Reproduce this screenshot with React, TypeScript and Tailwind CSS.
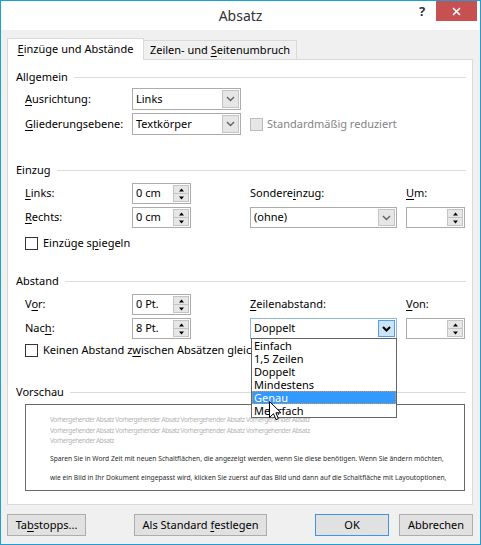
import type { ReactNode } from "react";

// accelerator key underline
const U = ({ children }: { children: ReactNode }) => (
  <span className="underline decoration-1 underline-offset-[2px]">{children}</span>
);

function Chevron({ dark = false }: { dark?: boolean }) {
  return (
    <svg width="9" height="6" viewBox="0 0 9 6">
      <path
        d="M1 1l3.5 3.5L8 1"
        fill="none"
        stroke={dark ? "#000" : "#606060"}
        strokeWidth={dark ? 2 : 1.4}
      />
    </svg>
  );
}

function Arrow({ down = false }: { down?: boolean }) {
  return (
    <svg width="7" height="4" viewBox="0 0 7 4">
      <path d={down ? "M1 0.5h5L3.5 3.5z" : "M1 3.5h5L3.5 0.5z"} fill="#000" />
    </svg>
  );
}

function Select({
  value,
  className = "",
  focused = false,
  children,
}: {
  value: string;
  className?: string;
  focused?: boolean;
  children?: ReactNode;
}) {
  return (
    <div
      className={`relative flex items-stretch border bg-white ${
        focused ? "border-[#8fb8e0]" : "border-[#acacac]"
      } ${className}`}
    >
      <div className="flex-1 pl-[3px] flex items-center">{value}</div>
      <div
        className={`w-[17px] m-px flex items-center justify-center border ${
          focused ? "border-[#569de5] bg-[#cce4f7]" : "border-[#c4c4c4] bg-[#e6e6e6]"
        }`}
      >
        <Chevron dark={focused} />
      </div>
      {children}
    </div>
  );
}

function Spin({ value = "" }: { value?: string }) {
  return (
    <div className="flex w-[59px] h-[21px] border border-[#acacac] bg-white">
      <div className="flex-1 pl-[3px] flex items-center">{value}</div>
      <div className="w-[16px] my-px mr-px flex flex-col">
        <div className="flex-1 flex items-center justify-center bg-[#e6e6e6] border border-[#c4c4c4]">
          <Arrow />
        </div>
        <div className="flex-1 flex items-center justify-center bg-[#e6e6e6] border border-t-0 border-[#c4c4c4]">
          <Arrow down />
        </div>
      </div>
    </div>
  );
}

function Box({ disabled = false }: { disabled?: boolean }) {
  return (
    <span
      className={`block w-[13px] h-[13px] border ${
        disabled ? "border-[#bcbcbc] bg-[#e6e6e6]" : "border-[#333333] bg-white"
      }`}
    />
  );
}

function Group({ title }: { title: string }) {
  return (
    <div className="flex items-center h-[16px] pl-[8px] pr-[6px]">
      <span>{title}</span>
      <div className="flex-1 h-px bg-[#dcdcdc] ml-[6px]" />
    </div>
  );
}

function Btn({
  children,
  className = "",
  primary = false,
}: {
  children: ReactNode;
  className?: string;
  primary?: boolean;
}) {
  return (
    <button
      className={`h-[22px] flex items-center justify-center border bg-[#e1e1e1] ${
        primary ? "border-[#3c96ee]" : "border-[#adadad]"
      } ${className}`}
    >
      <span>{children}</span>
    </button>
  );
}

const spacing = ["Einfach", "1,5 Zeilen", "Doppelt", "Mindestens", "Genau", "Mehrfach"];
const prev = "Vorhergehender Absatz";

export default function App() {
  return (
    <div className="w-[481px] h-[545px] border border-[#1c9fd6] bg-[#f0f0f0] flex flex-col font-['Noto_Sans',sans-serif] text-[11px] text-black">
      {/* title bar */}
      <div className="h-[29px] bg-white grid grid-cols-[1fr_auto_1fr]">
        <div />
        <div className="flex items-center text-[14px] text-[#333333]">Absatz</div>
        <div className="flex justify-end items-start">
          <span className="w-[14px] mt-[3px] mr-[7px] text-center text-[13px] leading-[14px] font-bold text-[#333333]">
            ?
          </span>
          <div className="w-[41px] h-[20px] mr-[3px] bg-[#c75050] flex items-center justify-center">
            <svg width="9" height="9" viewBox="0 0 9 9">
              <path d="M1 1l7 7M8 1l-7 7" stroke="#fff" strokeWidth="1.6" />
            </svg>
          </div>
        </div>
      </div>

      <div className="flex-1 flex flex-col pt-[8px]">
        {/* tabs */}
        <div className="ml-[6px] flex items-end h-[21px]">
          <div className="relative z-10 w-[137px] h-[22px] -mb-px border border-b-0 border-[#d9d9d9] bg-white flex items-center justify-center">
            <span>
              <U>E</U>inzüge und Abstände
            </span>
          </div>
          <div className="w-[153px] h-[19px] border border-l-0 border-b-0 border-[#d9d9d9] bg-[#f0f0f0] flex items-center justify-center">
            <span>
              Zeilen- und <U>S</U>eitenumbruch
            </span>
          </div>
        </div>

        {/* panel */}
        <div className="ml-[6px] w-[466px] h-[446px] border border-[#d9d9d9] bg-white flex flex-col pt-[9px]">
          <Group title="Allgemein" />
          <div className="mt-[3px] pl-[17px] flex items-center h-[22px]">
            <span className="w-[107px]">
              <U>A</U>usrichtung:
            </span>
            <Select value="Links" className="w-[109px] h-[22px]" />
          </div>
          <div className="mt-[3px] pl-[17px] flex items-center h-[22px]">
            <span className="w-[107px]">
              <U>G</U>liederungsebene:
            </span>
            <Select value="Textkörper" className="w-[109px] h-[22px]" />
            <span className="ml-[9px]">
              <Box disabled />
            </span>
            <span className="ml-[4px] text-[#838383]">Standardmäßig reduziert</span>
          </div>

          <div className="mt-[27px]">
            <Group title="Einzug" />
          </div>
          <div className="mt-[5px] pl-[17px] flex items-center h-[21px]">
            <span className="w-[107px]">
              <U>L</U>inks:
            </span>
            <Spin value="0 cm" />
            <span className="ml-[59px] w-[156px]">
              Sondere<U>i</U>nzug:
            </span>
            <span>
              <U>U</U>m:
            </span>
          </div>
          <div className="mt-[3px] pl-[17px] flex items-center h-[21px]">
            <span className="w-[107px]">
              <U>R</U>echts:
            </span>
            <Spin value="0 cm" />
            <Select value="(ohne)" className="ml-[59px] w-[147px] h-[21px]" />
            <div className="ml-[9px]">
              <Spin />
            </div>
          </div>
          <div className="mt-[7px] pl-[17px] flex items-center h-[16px]">
            <Box />
            <span className="ml-[5px]">
              Einzüge s<U>p</U>iegeln
            </span>
          </div>

          <div className="mt-[22px]">
            <Group title="Abstand" />
          </div>
          <div className="mt-[5px] pl-[17px] flex items-center h-[21px]">
            <span className="w-[107px]">
              V<U>o</U>r:
            </span>
            <Spin value="0 Pt." />
            <span className="ml-[59px] w-[156px]">
              <U>Z</U>eilenabstand:
            </span>
            <span>
              <U>V</U>on:
            </span>
          </div>
          <div className="mt-[3px] pl-[17px] flex items-center h-[21px]">
            <span className="w-[107px]">
              Nac<U>h</U>:
            </span>
            <Spin value="8 Pt." />
            <Select value="Doppelt" focused className="ml-[59px] w-[147px] h-[21px]">
              {/* open list */}
              <div className="absolute z-20 left-0 -right-px top-full border border-[#646464] bg-white">
                {spacing.map((s) => (
                  <div
                    key={s}
                    className={`h-[13px] leading-[13px] pl-[2px] ${
                      s === "Genau"
                        ? "bg-[#3399ff] text-white outline-1 outline-dotted -outline-offset-1 outline-[#d39a52]"
                        : ""
                    }`}
                  >
                    {s}
                  </div>
                ))}
                <svg
                  className="absolute left-[17px] top-[62px]"
                  width="13"
                  height="20"
                  viewBox="0 0 13 20"
                >
                  <path
                    d="M0.5 0.5V16.5L4.5 12.7L7 18.6L9.4 17.6L6.9 11.8H12Z"
                    fill="#fff"
                    stroke="#000"
                    strokeWidth="1"
                    strokeLinejoin="round"
                  />
                </svg>
              </div>
            </Select>
            <div className="ml-[9px]">
              <Spin />
            </div>
          </div>
          <div className="mt-[3px] pl-[17px] flex items-center h-[16px] whitespace-nowrap">
            <Box />
            <span className="ml-[5px]">
              Keinen Abstand z<U>w</U>ischen Absätzen gleichen Formats
            </span>
          </div>

          <div className="mt-[26px]">
            <Group title="Vorschau" />
          </div>
          <div className="mt-[4px] ml-[17px] w-[440px] h-[87px] border border-[#696969] pl-[24px] pt-[10px] whitespace-nowrap overflow-hidden">
            <div className="text-[#b4b4b4] text-[6.5px] tracking-[-0.4px] leading-[10.7px]">
              <div>{[prev, prev, prev, prev].join(" ")}</div>
              <div>{[prev, prev, prev, prev].join(" ")}</div>
              <div>{prev}</div>
            </div>
            <div className="mt-[7px] text-[6.7px] leading-[10.7px] text-[#2b2b2b]">
              Sparen Sie in Word Zeit mit neuen Schaltflächen, die angezeigt werden, wenn Sie diese
              benötigen. Wenn Sie ändern möchten,
            </div>
            <div className="mt-[8.6px] text-[6.7px] leading-[10.7px] text-[#2b2b2b]">
              wie ein Bild in Ihr Dokument eingepasst wird, klicken Sie zuerst auf das Bild und dann
              auf die Schaltfläche mit Layoutoptionen,
            </div>
          </div>
        </div>

        {/* footer buttons */}
        <div className="mt-[9px] ml-[6px] flex">
          <Btn className="w-[79px]">
            Ta<U>b</U>stopps...
          </Btn>
          <Btn className="ml-[48px] w-[133px]">
            Als Standard <U>f</U>estlegen
          </Btn>
          <Btn primary className="ml-[48px] w-[74px]">
            OK
          </Btn>
          <Btn className="ml-[10px] w-[74px]">Abbrechen</Btn>
        </div>
      </div>
    </div>
  );
}
